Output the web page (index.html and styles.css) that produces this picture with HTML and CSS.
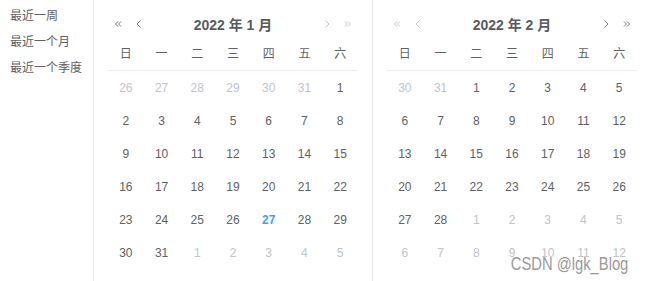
FILE: index.html
```html
<!DOCTYPE html>
<html lang="zh-CN">
<head>
  <meta charset="UTF-8">
  <title>日期范围选择</title>
  <link rel="stylesheet" href="styles.css">
</head>
<body>

<div class="picker">
  <div class="sidebar">
    <button class="shortcut">最近一周</button>
    <button class="shortcut">最近一个月</button>
    <button class="shortcut">最近一个季度</button>
  </div>

  <div class="panel panel-left">
    <div class="content">
      <div class="header">
        <div class="arrows">
          <button class="arrow"><svg width="8" height="8" viewBox="0 0 8 8"><path d="M4 1.5 1.5 4 4 6.5M7 1.5 4.5 4 7 6.5" /></svg></button>
          <button class="arrow"><svg width="8" height="8" viewBox="0 0 8 8"><path d="M5.5 0.5 2 4l3.5 3.5" /></svg></button>
        </div>
        <div class="title">2022 年 1 月</div>
        <div class="arrows">
          <button class="arrow disabled"><svg width="8" height="8" viewBox="0 0 8 8"><path d="M2.5 0.5 6 4 2.5 7.5" /></svg></button>
          <button class="arrow disabled"><svg width="8" height="8" viewBox="0 0 8 8"><path d="M4 1.5 6.5 4 4 6.5M1 1.5 3.5 4 1 6.5" /></svg></button>
        </div>
      </div>
      <div class="weekdays"></div>
      <div class="days" data-year="2022" data-month="0"></div>
    </div>
  </div>

  <div class="panel panel-right">
    <div class="content">
      <div class="header">
        <div class="arrows">
          <button class="arrow disabled"><svg width="8" height="8" viewBox="0 0 8 8"><path d="M4 1.5 1.5 4 4 6.5M7 1.5 4.5 4 7 6.5" /></svg></button>
          <button class="arrow disabled"><svg width="8" height="8" viewBox="0 0 8 8"><path d="M5.5 0.5 2 4l3.5 3.5" /></svg></button>
        </div>
        <div class="title">2022 年 2 月</div>
        <div class="arrows">
          <button class="arrow"><svg width="8" height="8" viewBox="0 0 8 8"><path d="M2.5 0.5 6 4 2.5 7.5" /></svg></button>
          <button class="arrow"><svg width="8" height="8" viewBox="0 0 8 8"><path d="M4 1.5 6.5 4 4 6.5M1 1.5 3.5 4 1 6.5" /></svg></button>
        </div>
      </div>
      <div class="weekdays"></div>
      <div class="days" data-year="2022" data-month="1"></div>
    </div>
  </div>
</div>

<div class="watermark">CSDN @lgk_Blog</div>

<script>
  const weekNames = ["日", "一", "二", "三", "四", "五", "六"];
  const today = new Date(2022, 0, 27);

  document.querySelectorAll(".weekdays").forEach((row) => {
    weekNames.forEach((name) => {
      const cell = document.createElement("span");
      cell.innerText = name;
      row.appendChild(cell);
    });
  });

  // 6 rows x 7 columns, starting on the Sunday before the 1st
  document.querySelectorAll(".days").forEach((grid) => {
    const year = +grid.dataset.year;
    const month = +grid.dataset.month;
    const first = new Date(year, month, 1);
    const start = new Date(year, month, 1 - first.getDay());

    for (let i = 0; i < 42; i++) {
      const d = new Date(start.getFullYear(), start.getMonth(), start.getDate() + i);
      const cell = document.createElement("span");
      cell.className = "day";
      if (d.getMonth() !== month) cell.classList.add("other");
      if (d.getTime() === today.getTime() && d.getMonth() === month) cell.classList.add("today");
      cell.innerText = d.getDate();
      grid.appendChild(cell);
    }
  });
</script>

</body>
</html>
```

FILE: styles.css
```css
:root {
  --text: #606266;
  --muted: #c0c4cc;
  --primary: #409eff;
  --border: #e4e7ed;
  --line: #ebeef5;
}

* {
  box-sizing: border-box;
}

body {
  margin: 0;
  height: 281px;
  overflow: hidden;
  background: #fff;
  color: var(--text);
  font-family: 'Liberation Sans', 'Noto Sans CJK SC', sans-serif;
}

button {
  font-family: inherit;
  border: none;
  background: none;
  padding: 0;
  cursor: pointer;
}

.picker {
  display: flex;
  height: 281px;
}

.sidebar {
  width: 94px;
  border-right: 1px solid var(--border);
  padding-top: 3px;
  display: flex;
  flex-direction: column;
}

.shortcut {
  text-align: left;
  padding-left: 10px;
  font-size: 12px;
  line-height: 26px;
  color: var(--text);
}

.panel {
  padding-top: 12px;
}

.panel-left {
  width: 279px;
  border-right: 1px solid var(--border);
}

.panel-right {
  flex: 1;
}

.content {
  width: 250px;
  margin-left: 14px;
}

.header {
  display: grid;
  grid-template-columns: 41px 1fr 41px;
  align-items: center;
  height: 23px;
}

.arrows {
  display: flex;
  gap: 1px;
}

.arrow {
  width: 20px;
  height: 23px;
  display: flex;
  align-items: center;
  justify-content: center;
  color: #74777d;
}

.arrow svg path {
  fill: none;
  stroke: currentColor;
  stroke-width: 1;
}

.arrow.disabled {
  color: #c6c8cd;
}

.title {
  text-align: center;
  font-size: 14px;
  font-weight: bold;
  color: #5a5c61;
}

.weekdays {
  display: grid;
  grid-template-columns: repeat(7, 1fr);
  height: 36px;
  align-items: center;
  border-bottom: 1px solid var(--line);
  font-size: 12px;
  text-align: center;
}

.days {
  display: grid;
  grid-template-columns: repeat(7, 1fr);
  grid-auto-rows: 33px;
  align-items: center;
  font-size: 12px;
  text-align: center;
}

.day.other {
  color: var(--muted);
}

.day.today {
  color: var(--primary);
  font-weight: bold;
}

.watermark {
  position: absolute;
  right: 22px;
  bottom: 8px;
  font-size: 18px;
  line-height: 18px;
  color: #9a9a9a;
  transform: scaleX(0.82);
  transform-origin: right center;
  text-shadow: 0 0 2px #fff;
}
```
